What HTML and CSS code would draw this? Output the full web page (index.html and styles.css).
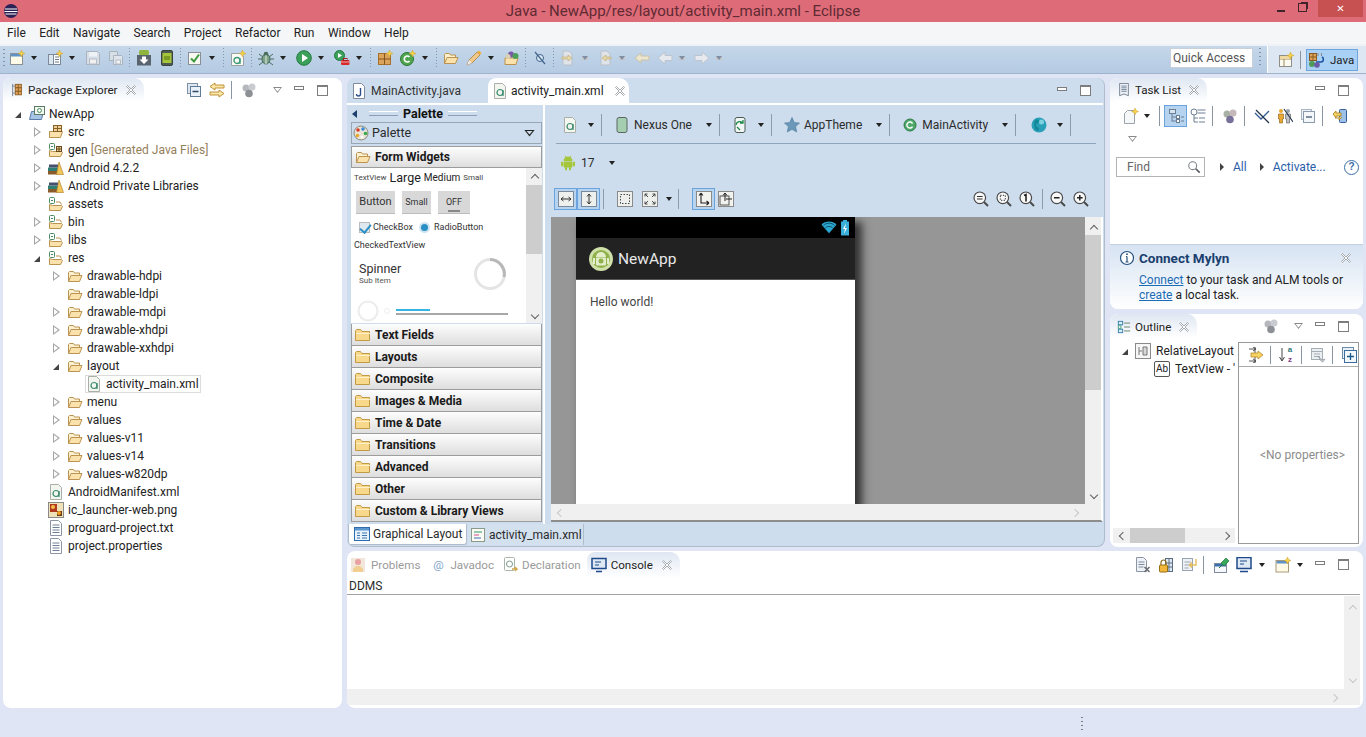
FILE: index.html
```html
<!DOCTYPE html>
<html lang="en">
<head>
<meta charset="utf-8">
<title>Java - NewApp/res/layout/activity_main.xml - Eclipse</title>
<link rel="stylesheet" href="styles.css">
</head>
<body>
<svg class="defs" width="0" height="0" aria-hidden="true">
  <symbol id="newwin" viewBox="0 0 16 16"><rect x="1.500" y="3.500" width="12" height="11" fill="#fffbe8" stroke="#8a8f96"/><rect x="2" y="4" width="11" height="2.500" fill="#5f93c8"/><path d="M12.500 0l1 2.500 2.500 1-2.500 1-1 2.500-1-2.500-2.500-1 2.500-1z" fill="#f7d24a" stroke="#c9a02c" stroke-width=".5"/></symbol>
  <symbol id="newpkg" viewBox="0 0 16 16"><rect x="1.500" y="4.500" width="5" height="10" fill="#dbe6ee" stroke="#7c8a99"/><rect x="6.500" y="4.500" width="7" height="10" fill="#fff" stroke="#7c8a99"/><path d="M8 7h4M8 9.500h4M8 12h4" stroke="#6c7a8a"/><path d="M12.500 0l1 2.500 2.500 1-2.500 1-1 2.500-1-2.500-2.500-1 2.500-1z" fill="#f7d24a" stroke="#c9a02c" stroke-width=".5"/></symbol>
  <symbol id="save" viewBox="0 0 16 16"><path d="M1.500 1.500h11l2 2v11h-13z" fill="#d6dee8" stroke="#a9b2bd"/><rect x="4" y="2" width="8" height="4.500" fill="#eef2f6"/><rect x="4.500" y="9" width="7" height="5" fill="#f0f0f0" stroke="#b5bcc4"/></symbol>
  <symbol id="saveall" viewBox="0 0 16 16"><path d="M1.500 1.500h8v9h-8z" fill="#d6dee8" stroke="#aab2bc"/><path d="M5.500 5.500h8l1 1v8h-9z" fill="#dfe5ec" stroke="#a9b2bd"/><rect x="8" y="10" width="4.500" height="4" fill="#f2f2f2" stroke="#b5bcc4"/></symbol>
  <symbol id="sdk" viewBox="0 0 16 16"><rect x="3" y="0" width="10" height="5" rx="1.500" fill="#8fb63c"/><rect x="1" y="5" width="14" height="10.500" fill="#59646e"/><path d="M6 6.500h4v3h2.500L8 14 3.500 9.500H6z" fill="#fff"/></symbol>
  <symbol id="avd" viewBox="0 0 16 16"><rect x="2.500" y=".5" width="11" height="15" rx="1.500" fill="#4f5a52" stroke="#39423b"/><rect x="3.500" y="3" width="9" height="10" fill="#a5c63b"/><path d="M5 6h6v4H5z" fill="#7c9a24"/></symbol>
  <symbol id="check" viewBox="0 0 16 16"><rect x="1.500" y="2.500" width="12" height="12" fill="#f8f8f0" stroke="#8a8f96"/><path d="M4 8.500l3 3 5-7" fill="none" stroke="#3d9a3d" stroke-width="2"/></symbol>
  <symbol id="newand" viewBox="0 0 16 16"><path d="M1.500 3.500h9l3 3v9h-12z" fill="#fbfbf4" stroke="#9aa2a8"/><circle cx="7" cy="10.500" r="3" fill="none" stroke="#3c9a7a" stroke-width="1.300"/><path d="M10 8v6" stroke="#3c9a7a" stroke-width="1.300"/><path d="M12.500 0l1 2.500 2.500 1-2.500 1-1 2.500-1-2.500-2.500-1 2.500-1z" fill="#f7d24a" stroke="#c9a02c" stroke-width=".5"/></symbol>
  <symbol id="bug" viewBox="0 0 16 16"><ellipse cx="8" cy="9" rx="4" ry="5" fill="#7da48a" stroke="#3e6a55"/><circle cx="8" cy="4" r="2.300" fill="#496f5e"/><path d="M1 4l4 3M15 4l-4 3M0 9h4M16 9h-4M1 15l4-3M15 15l-4-3" stroke="#4c6b5c"/><path d="M8 5v9" stroke="#e8f0e0"/></symbol>
  <symbol id="run" viewBox="0 0 16 16"><circle cx="8" cy="8" r="7.300" fill="#3ba05a" stroke="#237a3f"/><path d="M6 4l6 4-6 4z" fill="#fff"/></symbol>
  <symbol id="runext" viewBox="0 0 16 16"><circle cx="5.500" cy="5.500" r="5" fill="#3ba05a" stroke="#237a3f"/><path d="M4 3l4 2.500L4 8z" fill="#fff"/><rect x="7" y="10" width="8.500" height="5" rx="1" fill="#d8292b"/><rect x="9.500" y="8.500" width="3.500" height="2" fill="none" stroke="#a61c1e"/><path d="M7 12h8.500" stroke="#fff" stroke-width=".6"/></symbol>
  <symbol id="pkgnew" viewBox="0 0 16 16"><rect x="1.500" y="3.500" width="12" height="11" fill="#dca35a" stroke="#a9702a"/><path d="M7.500 3.500v11M1.500 9h12" stroke="#85541c"/><path d="M12.500 0l1 2.500 2.500 1-2.500 1-1 2.500-1-2.500-2.500-1 2.500-1z" fill="#f7d24a" stroke="#c9a02c" stroke-width=".5"/></symbol>
  <symbol id="cnew" viewBox="0 0 16 16"><circle cx="7" cy="9" r="6.500" fill="#4fa44e" stroke="#2e7a35"/><path d="M9.500 7a3 3 0 1 0 0 4" fill="none" stroke="#fff" stroke-width="1.600"/><path d="M12.500 0l1 2.500 2.500 1-2.500 1-1 2.500-1-2.500-2.500-1 2.500-1z" fill="#f7d24a" stroke="#c9a02c" stroke-width=".5"/></symbol>
  <symbol id="folder" viewBox="0 0 16 16"><path d="M1.500 13.500v-9l1-1h4l1 1.500h5v2.500" fill="#fdf0cf" stroke="#bb9350"/><path d="M1.500 13.500l2.500-6h11l-2.500 6z" fill="#fbe1ab" stroke="#bb9350"/></symbol>
  <symbol id="srcfold" viewBox="0 0 16 16"><path d="M1.500 13.500v-6h13l-2 6z" fill="#fbe1ab" stroke="#bb9350"/><path d="M1.500 13.500v-6" stroke="#bb9350"/><rect x="5.500" y="1.500" width="8" height="6" fill="#eed09a" stroke="#8a6124"/><path d="M9.500 1.500v6M5.500 4.500h8" stroke="#8a6124"/></symbol>
  <symbol id="genfold" viewBox="0 0 16 16"><path d="M1.500 14.500v-6l3 1h9l1 1-2 4z" fill="#fbe1ab" stroke="#bb9350"/><rect x="1.500" y="1.500" width="5" height="6" rx="1" fill="#fff" stroke="#4c8a63"/><path d="M3 4.500h2" stroke="#4c8a63"/><rect x="8.500" y="4.500" width="5" height="5" fill="#eed09a" stroke="#6a4a1a"/><path d="M11 4.500v5M8.500 7h5" stroke="#6a4a1a"/></symbol>
  <symbol id="resfold" viewBox="0 0 16 16"><path d="M1.500 14.500v-6l3 1h9l1 1-2 4z" fill="#fbe1ab" stroke="#bb9350"/><rect x="1.500" y="1.500" width="5" height="6" rx="1" fill="#fff" stroke="#4c8a63"/><path d="M3 4.500h2" stroke="#4c8a63"/><path d="M8 6h4l1.500 2.500" fill="none" stroke="#bb9350"/></symbol>
  <symbol id="lib" viewBox="0 0 16 16"><rect x="0" y="11" width="10" height="3.500" fill="#8a5a28"/><rect x="0" y="7.500" width="10" height="3.500" fill="#2d7f73"/><rect x="1" y="4.500" width="9" height="3" fill="#46506e"/><path d="M11 2l4.500 12.500h-7z" fill="#f1c75a" stroke="#b5862c" stroke-width=".7"/></symbol>
  <symbol id="proj" viewBox="0 0 16 16"><path d="M.5 13.500l2-8h12l-2 8z" fill="#a8c4e6" stroke="#5a7ea8"/><rect x="5.500" y=".5" width="10" height="8" fill="#f4f8f2" stroke="#5a7a62"/><circle cx="10.500" cy="4.500" r="2" fill="none" stroke="#4c8a63"/></symbol>
  <symbol id="xml" viewBox="0 0 16 16"><path d="M2.500 .5h8l3 3v12h-11z" fill="#f2f6ee" stroke="#a8b0a8"/><circle cx="8" cy="9.500" r="3" fill="none" stroke="#3c8a72" stroke-width="1.200"/><path d="M11 7v6" stroke="#3c8a72" stroke-width="1.200"/></symbol>
  <symbol id="txt" viewBox="0 0 16 16"><path d="M2.500 .5h8l3 3v12h-11z" fill="#fff" stroke="#8a96a6"/><path d="M4.500 5h7M4.500 7.500h7M4.500 10h7M4.500 12.500h7" stroke="#6e7f98"/></symbol>
  <symbol id="javafile" viewBox="0 0 16 16"><path d="M2.500 .5h8l3 3v12h-11z" fill="#fff" stroke="#7f8b9c"/><path d="M9.500 5v6a2 2 0 0 1-4 0" fill="none" stroke="#2c4f8c" stroke-width="1.400"/></symbol>
  <symbol id="png" viewBox="0 0 16 16"><rect x=".5" y=".5" width="15" height="15" fill="#f0e2b8" stroke="#8a8a8a"/><rect x="2" y="2" width="7" height="8" fill="#b13a1e"/><circle cx="5" cy="5" r="2" fill="#f2c14a"/><rect x="9" y="9" width="5" height="5" fill="#6a3a1a"/><circle cx="11" cy="11" r="2" fill="#f0a020"/></symbol>
  <symbol id="pkgview" viewBox="0 0 16 16"><path d="M3 1v14" stroke="#6c7a8a"/><rect x="6" y="1.500" width="7" height="4" fill="#dca35a" stroke="#8a5a20"/><rect x="6" y="5.500" width="7" height="4" fill="#dca35a" stroke="#8a5a20"/><rect x="6" y="9.500" width="7" height="4" fill="#dca35a" stroke="#8a5a20"/><path d="M9.500 1.500v12" stroke="#8a5a20"/><path d="M3 3.500h3M3 11.500h3" stroke="#6c7a8a"/></symbol>
  <symbol id="close" viewBox="0 0 12 12"><path d="M1.500 2.500l1-1L6 5l3.500-3.500 1 1L7 6l3.500 3.500-1 1L6 7l-3.500 3.500-1-1L5 6z" fill="#fff" stroke="#9aa0a6" stroke-width=".9"/></symbol>
  <symbol id="collapse" viewBox="0 0 16 16"><rect x="1.500" y="1.500" width="10" height="10" fill="#dfe8f2" stroke="#7f8fa2"/><rect x="4.500" y="4.500" width="10" height="10" fill="#eaf1f8" stroke="#5f7a96"/><path d="M6.500 9.500h6" stroke="#324a64" stroke-width="1.300"/></symbol>
  <symbol id="sync" viewBox="0 0 16 16"><path d="M6 1L1 4.500 6 8V6h9V3H6z" fill="#fbe6a6" stroke="#b88a2c" stroke-width=".9"/><path d="M10 8l5 3.500-5 3.500v-2H1v-3h9z" fill="#fbe6a6" stroke="#b88a2c" stroke-width=".9"/></symbol>
  <symbol id="balls" viewBox="0 0 16 16"><circle cx="5" cy="6" r="3.500" fill="#b4b8bc"/><circle cx="11" cy="5" r="3.500" fill="#c8ccd0"/><circle cx="8" cy="11.500" r="3.800" fill="#8d9196"/></symbol>
  <symbol id="balls2" viewBox="0 0 16 16"><circle cx="5" cy="6" r="3.500" fill="#a9b0a4"/><circle cx="11" cy="5" r="3.500" fill="#c4b8b8"/><circle cx="8" cy="11.500" r="3.800" fill="#77719a"/></symbol>
  <symbol id="java" viewBox="0 0 16 16"><path d="M10 1v3M13.500 1v3" stroke="#8a8a8a"/><path d="M8 10h5c3 0 3-4 1-5" fill="none" stroke="#1d50a0" stroke-width="1.500"/><rect x="1.500" y="1.500" width="7" height="7" fill="#dca35a" stroke="#8a5a20"/><path d="M5 1.500v7M1.500 5h7" stroke="#8a5a20"/><circle cx="4" cy="12" r="3" fill="#4f9a5a"/><circle cx="9" cy="13" r="2.800" fill="#6a5aa8"/></symbol>
  <symbol id="persp" viewBox="0 0 16 16"><rect x="1.500" y="3.500" width="12" height="11" fill="#fbfbf2" stroke="#8f8f88"/><path d="M1.500 7h12M6 7v7.500" stroke="#9c8a5a"/><rect x="2" y="4" width="11" height="3" fill="#f0d9a0"/><path d="M12.500 0l1 2.500 2.500 1-2.500 1-1 2.500-1-2.500-2.500-1 2.500-1z" fill="#f7d24a" stroke="#c9a02c" stroke-width=".5"/></symbol>
  <symbol id="task" viewBox="0 0 16 16"><path d="M3 .5h10v14l-5-2-5 2z" fill="#eef1f6" stroke="#6f7a8c"/><path d="M5 3.500h6M5 5.500h6M5 7.500h6M5 9.500h6" stroke="#687a92"/></symbol>
  <symbol id="tasknew" viewBox="0 0 16 16"><path d="M1.500 5.500l3-3h7v13h-10z" fill="#f6f7f8" stroke="#9aa2ac"/><path d="M12 0l1 2.500 2.500 1-2.500 1-1 2.500-1-2.500-2.500-1 2.500-1z" fill="#f7d24a" stroke="#c9a02c" stroke-width=".5"/></symbol>
  <symbol id="cat" viewBox="0 0 16 16"><rect x="1.500" y="1.500" width="6" height="4" fill="#d8e4f0" stroke="#6c7e94"/><path d="M4 5.500v8M4 9h4M4 13h4" stroke="#6c7e94"/><rect x="8.500" y="7.500" width="3" height="3" fill="#fff" stroke="#6c7e94"/><rect x="8.500" y="11.500" width="3" height="3" fill="#fff" stroke="#6c7e94"/><path d="M13 9h3M13 13h3" stroke="#6c7e94"/></symbol>
  <symbol id="sched" viewBox="0 0 16 16"><circle cx="4" cy="4" r="3" fill="#fff" stroke="#6c7e94"/><path d="M7.500 2h8M7.500 5h8M4 7v7M4 10h4M4 14h4M9 10h6M9 14h6" stroke="#6c7e94"/></symbol>
  <symbol id="hide" viewBox="0 0 16 16"><path d="M1 5l6 6 8-8" fill="none" stroke="#2f5c92" stroke-width="1.300"/><path d="M2 2l13 13" stroke="#20324a" stroke-width="1.200"/></symbol>
  <symbol id="people" viewBox="0 0 16 16"><circle cx="4" cy="3" r="2" fill="#e9a834"/><path d="M1.500 6h5v5h-1v4h-3v-4h-1z" fill="#e9a834" stroke="#8a5a14" stroke-width=".6"/><circle cx="11" cy="3" r="2" fill="#9aa2a8"/><path d="M8.500 6h5v5h-1v4h-3v-4h-1z" fill="#c0c4c8" stroke="#555" stroke-width=".6"/><path d="M7 1l9 13" stroke="#20324a" stroke-width="1.100"/></symbol>
  <symbol id="collapseb" viewBox="0 0 16 16"><rect x="1.500" y="1.500" width="10" height="10" fill="#eef2f6" stroke="#aab4c0"/><rect x="3.500" y="3.500" width="11" height="11" fill="#f4f7fa" stroke="#8a9aac"/><path d="M6 9h6" stroke="#5a6c80" stroke-width="1.300"/></symbol>
  <symbol id="repo" viewBox="0 0 16 16"><rect x="7.500" y="1.500" width="7" height="13" rx="1" fill="#9cc0e6" stroke="#345f9a"/><path d="M1 6l3-3v2h5v3H4v2z" fill="#f6d362" stroke="#a87c1c" stroke-width=".8"/><path d="M10 9l-3 3v-2H3" fill="#f6d362" stroke="#a87c1c" stroke-width=".8"/></symbol>
  <symbol id="search" viewBox="0 0 16 16"><circle cx="6.500" cy="6.500" r="4.500" fill="#fff" stroke="#7c8288" stroke-width="1.200"/><path d="M10 10l4.500 4.500" stroke="#595e64" stroke-width="2"/></symbol>
  <symbol id="info" viewBox="0 0 16 16"><circle cx="8" cy="8" r="6.500" fill="#fff" stroke="#24527f" stroke-width="1.200"/><path d="M8 6.500v5.500M6.500 12h3M7 6.500h1" stroke="#24527f" stroke-width="1.200"/><circle cx="8" cy="4.200" r=".9" fill="#24527f"/></symbol>
  <symbol id="outline" viewBox="0 0 16 16"><rect x="1.500" y="1.500" width="5" height="4" fill="#d8ecf6" stroke="#2f7aa8"/><rect x="1.500" y="10.500" width="5" height="4" fill="#d8ecf6" stroke="#2f7aa8"/><rect x="1.500" y="6.500" width="3" height="3" fill="#fff" stroke="#3a9a7a"/><path d="M8 3.500h7M8 8h7M8 12.500h7" stroke="#5c7a60"/></symbol>
  <symbol id="relative" viewBox="0 0 16 16"><rect x=".5" y=".5" width="15" height="15" fill="#f6f6f6" stroke="#8a8a8a"/><path d="M4 4v8M4 8h3M12 4v8h-4V4z" fill="#d8d8d8" stroke="#777"/></symbol>
  <symbol id="filter" viewBox="0 0 16 16"><path d="M1 2h6M1 14h6M5 0l3 2-3 2M5 12l3 2-3 2M7 0v16" fill="none" stroke="#444" stroke-width=".9"/><path d="M3 6h7V4l5 4-5 4v-2H3z" fill="#f6d362" stroke="#b88a2c" stroke-width=".8"/></symbol>
  <symbol id="sortarrow" viewBox="0 0 6 16"><path d="M3 1v12M.5 10L3 14l2.500-4" fill="none" stroke="#444"/></symbol>
  <symbol id="propdoc" viewBox="0 0 16 16"><rect x="1.500" y="1.500" width="11" height="11" fill="#eceff2" stroke="#a6aeb6"/><path d="M1.500 4.500h11M4 7h6M4 9.500h6" stroke="#a6aeb6"/><path d="M8 9l4 4 3-1-2 3-2-1z" fill="#ccd2d8" stroke="#8a9098" stroke-width=".6"/></symbol>
  <symbol id="expand" viewBox="0 0 16 16"><rect x="1.500" y=".5" width="11" height="11" fill="#e8f1f8" stroke="#6c8cac"/><rect x="3.500" y="3.500" width="12" height="12" fill="#f2f8fc" stroke="#3c6c9c"/><path d="M9.500 6v7M6 9.500h7" stroke="#1c5a8c" stroke-width="1.300"/></symbol>
  <symbol id="palette" viewBox="0 0 16 16"><circle cx="8" cy="8" r="7" fill="#e8e4d8" stroke="#8a8878"/><circle cx="5" cy="5" r="1.800" fill="#d83a2a"/><circle cx="10" cy="4" r="1.800" fill="#3a8ad8"/><circle cx="12.500" cy="8.500" r="1.800" fill="#3aa84a"/><circle cx="4.500" cy="10.500" r="1.800" fill="#e8a82a"/><circle cx="9" cy="12" r="1.500" fill="#fff"/></symbol>
  <symbol id="fclosed" viewBox="0 0 16 16"><path d="M.5 13.500v-10l1-1h4l1.500 2h7.500v9z" fill="#f8d98c" stroke="#c29a46"/><path d="M1 6.500h14" stroke="#fdf0c8"/></symbol>
  <symbol id="phone" viewBox="0 0 16 16"><rect x="3" y=".5" width="10" height="15" rx="2" fill="#a5cdb0" stroke="#5a6860"/></symbol>
  <symbol id="rot" viewBox="0 0 16 16"><rect x="3" y=".5" width="10" height="15" rx="2" fill="#f2f6f4" stroke="#4a5a50"/><path d="M4 8a4 4 0 0 1 7-2M11 3v3H8M5 10l3 3" fill="none" stroke="#1e8a4a" stroke-width="1.300"/></symbol>
  <symbol id="apptheme" viewBox="0 0 16 16"><path d="M8 .5l2.300 5 5.200.6-3.900 3.500 1.100 5.400L8 12.300l-4.700 2.700 1.100-5.400L.5 6.100l5.200-.6z" fill="#6b97b8" stroke="#4a7a9a" stroke-width=".6"/></symbol>
  <symbol id="cact" viewBox="0 0 16 16"><circle cx="8" cy="8" r="6" fill="#4fa96a" stroke="#2e7a45"/><path d="M10.500 6.500a3 3 0 1 0 0 3" fill="none" stroke="#fff" stroke-width="1.500"/></symbol>
  <symbol id="globe" viewBox="0 0 16 16"><circle cx="8" cy="8" r="7.500" fill="#2aa0b8"/><path d="M4 3c3-1 5 0 4 2S5 6 5 8s3 2 3 4-2 2-3 1S2 6 4 3z" fill="#128898"/><circle cx="10.500" cy="5" r="2.500" fill="#7fd2e0"/></symbol>
  <symbol id="droid" viewBox="0 0 16 16"><path d="M3.500 6a4.500 4.500 0 0 1 9 0z" fill="#a4c639"/><path d="M5 1l1.500 2M11 1L9.500 3" stroke="#a4c639"/><rect x="3.500" y="6.500" width="9" height="6" rx="1" fill="#a4c639"/><rect x="1" y="6.500" width="2" height="5" rx="1" fill="#a4c639"/><rect x="13" y="6.500" width="2" height="5" rx="1" fill="#a4c639"/><rect x="5" y="12" width="2" height="3.500" rx="1" fill="#a4c639"/><rect x="9" y="12" width="2" height="3.500" rx="1" fill="#a4c639"/></symbol>
  <symbol id="fitw" viewBox="0 0 16 16"><rect x=".5" y=".5" width="15" height="15" fill="#eef0ee" stroke="#7a8a9a"/><path d="M3 8h10M3 8l2.500-2M3 8l2.500 2M13 8l-2.500-2M13 8l-2.500 2" fill="none" stroke="#333"/></symbol>
  <symbol id="fith" viewBox="0 0 16 16"><rect x=".5" y=".5" width="15" height="15" fill="#eef0ee" stroke="#7a8a9a"/><path d="M8 3v10M8 3L6 5.500M8 3l2 2.500M8 13l-2-2.500M8 13l2-2.500" fill="none" stroke="#333"/></symbol>
  <symbol id="dotted" viewBox="0 0 16 16"><rect x=".5" y=".5" width="15" height="15" fill="#eef0ee" stroke="#8a8a8a"/><rect x="3.500" y="3.500" width="9" height="9" fill="none" stroke="#444" stroke-dasharray="1.500 1.500"/></symbol>
  <symbol id="arrows4" viewBox="0 0 16 16"><rect x=".5" y=".5" width="15" height="15" fill="#eef0ee" stroke="#8a8a8a"/><path d="M3 3l3 3M13 3l-3 3M3 13l3-3M13 13l-3-3M3 3h2.500M3 3v2.500M13 3h-2.500M13 3v2.500M3 13h2.500M3 13v-2.500M13 13h-2.500M13 13v-2.500" fill="none" stroke="#444"/></symbol>
  <symbol id="lay1" viewBox="0 0 16 16"><rect x=".5" y=".5" width="15" height="15" fill="#f2f2ee" stroke="#8a8a8a"/><path d="M5 2v10h8M5 2L3 4.500M5 2l2 2.500M13 12l-2.500-2M13 12l-2.500 2" fill="none" stroke="#222" stroke-width="1.100"/></symbol>
  <symbol id="lay2" viewBox="0 0 16 16"><rect x=".5" y=".5" width="15" height="15" fill="#f2f2ee" stroke="#8a8a8a"/><rect x="2" y="5" width="9" height="9" fill="none" stroke="#555"/><path d="M7 2v8M7 2L5 4.500M7 2l2 2.500M14 8H8" fill="none" stroke="#222"/></symbol>
  <symbol id="zeq" viewBox="0 0 16 16"><circle cx="6.800" cy="6.800" r="5.800" fill="#f8f8f8" stroke="#4a4a4a" stroke-width="1.200"/><path d="M11 11l4 4" stroke="#4a4a4a" stroke-width="2"/><path d="M4 5.500h5.600M4 8h5.600" stroke="#333" stroke-width="1.200"/></symbol>
  <symbol id="zfit" viewBox="0 0 16 16"><circle cx="6.800" cy="6.800" r="5.800" fill="#f8f8f8" stroke="#4a4a4a" stroke-width="1.200"/><path d="M11 11l4 4" stroke="#4a4a4a" stroke-width="2"/><rect x="4.300" y="4.300" width="5" height="5" fill="none" stroke="#333" stroke-dasharray="1.300 1.300"/></symbol>
  <symbol id="zone" viewBox="0 0 16 16"><circle cx="6.800" cy="6.800" r="5.800" fill="#f8f8f8" stroke="#4a4a4a" stroke-width="1.200"/><path d="M11 11l4 4" stroke="#4a4a4a" stroke-width="2"/><path d="M5 4.500l2-1v7" fill="none" stroke="#222" stroke-width="1.600"/></symbol>
  <symbol id="zminus" viewBox="0 0 16 16"><circle cx="6.800" cy="6.800" r="5.800" fill="#f8f8f8" stroke="#4a4a4a" stroke-width="1.200"/><path d="M11 11l4 4" stroke="#4a4a4a" stroke-width="2"/><path d="M4 6.800h5.600" stroke="#222" stroke-width="1.500"/></symbol>
  <symbol id="zplus" viewBox="0 0 16 16"><circle cx="6.800" cy="6.800" r="5.800" fill="#f8f8f8" stroke="#4a4a4a" stroke-width="1.200"/><path d="M11 11l4 4" stroke="#4a4a4a" stroke-width="2"/><path d="M4 6.800h5.600M6.800 4v5.600" stroke="#222" stroke-width="1.500"/></symbol>
  <symbol id="gl" viewBox="0 0 16 16"><rect x=".5" y="1.500" width="15" height="13" fill="#e8f2fa" stroke="#2f6cae"/><rect x="1" y="2" width="14" height="2.500" fill="#5b96cf"/><path d="M3 7h3M3 9.500h3M3 12h3M8 7h5M8 9.500h5M8 12h5" stroke="#3a74b0"/></symbol>
  <symbol id="xmlsrc" viewBox="0 0 16 16"><rect x="1.500" y="1.500" width="13" height="13" fill="#fbfbf4" stroke="#8a9a8a"/><path d="M4 5h8" stroke="#2f9a6a" stroke-width="1.200"/><path d="M4 8h5" stroke="#d24a8a" stroke-width="1.200"/><path d="M4 11h7" stroke="#3a6ab8" stroke-width="1.200"/></symbol>
  <symbol id="problems" viewBox="0 0 16 16"><rect x="1" y="1" width="14" height="14" fill="#f2e6da"/><circle cx="8" cy="5" r="3" fill="#e8a0a0"/><path d="M3 15v-3l3-3h4l3 3v3z" fill="#f0cf90"/></symbol>
  <symbol id="decl" viewBox="0 0 16 16"><rect x="2.500" y=".5" width="10" height="13" rx="1" fill="#fff" stroke="#a8b4a8"/><circle cx="7.500" cy="7" r="3" fill="none" stroke="#7a9a86"/><path d="M10 12h5l-2-2M15 12l-2 2" fill="none" stroke="#d2a84a" stroke-width="1.300"/></symbol>
  <symbol id="console" viewBox="0 0 16 16"><rect x="1" y="1.500" width="14" height="10" fill="#dfe9f4" stroke="#1e4a8c" stroke-width="1.500"/><path d="M4 5h6M4 8h4" stroke="#1e4a8c"/><path d="M5 14.500h6" stroke="#1e4a8c" stroke-width="1.500"/></symbol>
  <symbol id="clearc" viewBox="0 0 16 16"><path d="M1.500 .5h7l3 3v11h-10z" fill="#eef2f6" stroke="#8c96a2"/><path d="M3.500 5h6M3.500 7.500h6M3.500 10h5" stroke="#7c8a9c"/><path d="M9.500 10l5 5M14.500 10l-5 5" stroke="#6a6e72" stroke-width="1.600"/></symbol>
  <symbol id="lock" viewBox="0 0 16 16"><rect x="7.500" y="1.500" width="7" height="13" fill="#dfe9f2" stroke="#5a6c80"/><path d="M11 1.500v13M7.500 6h7M7.500 10h7" stroke="#5a6c80"/><path d="M3 8V5.500a2.500 2.500 0 0 1 5 0V8" fill="none" stroke="#8a6a1c" stroke-width="1.200"/><rect x="1.500" y="8" width="8" height="7" rx="1" fill="#f1b73a" stroke="#9a6f12"/></symbol>
  <symbol id="wordw" viewBox="0 0 16 16"><rect x="1.500" y="1.500" width="10" height="12" fill="#eef2f6" stroke="#9aa4b0"/><path d="M3.500 5h6M3.500 8h6M3.500 11h4" stroke="#9aa4b0"/><path d="M15 2v6H9M11 5.500L8.500 8l2.500 2.500" fill="none" stroke="#e4bc5a" stroke-width="1.400"/></symbol>
  <symbol id="pin" viewBox="0 0 16 16"><rect x="1.500" y="6.500" width="12" height="9" fill="#f6f8fa" stroke="#7c8a9a"/><rect x="2" y="7" width="11" height="2.500" fill="#3a70b0"/><path d="M8 6l5-5 3 3-5 5z" fill="#3aa85a" stroke="#1c7a3a" stroke-width=".7"/><path d="M9 8l-3 3" stroke="#1c7a3a"/></symbol>
  <symbol id="monitor" viewBox="0 0 16 16"><rect x="1" y=".5" width="14" height="11" fill="#dfe9f4" stroke="#1e4a8c" stroke-width="1.500"/><path d="M4 4h7M4 7h4" stroke="#1e4a8c"/><path d="M4 14.500h8" stroke="#1e4a8c" stroke-width="1.500"/></symbol>
  <symbol id="newcon" viewBox="0 0 16 16"><rect x="1" y="3.500" width="12.500" height="11.500" fill="#fff9e6" stroke="#a89a78"/><rect x="1.500" y="4" width="11.500" height="2.500" fill="#5f93c8"/><path d="M12.500 0l1 2.500 2.500 1-2.500 1-1 2.500-1-2.500-2.500-1 2.500-1z" fill="#f7d24a" stroke="#c9a02c" stroke-width=".5"/></symbol>
  <symbol id="undo" viewBox="0 0 16 16"><path d="M1 8l7-6v3.500h7v5H8V14z" fill="#e6eaef" stroke="#bcc4cf"/></symbol>
  <symbol id="redo" viewBox="0 0 16 16"><path d="M15 8L8 2v3.500H1v5h7V14z" fill="#e6eaef" stroke="#bcc4cf"/></symbol>
  <symbol id="lastedit" viewBox="0 0 16 16"><path d="M1 8l6-5v3h8v4H7v3z" fill="#ece6cf" stroke="#c9c2a8"/></symbol>
  <symbol id="annnext" viewBox="0 0 16 16"><path d="M3 1h6l3 3v11H3z" fill="#dfe4ea" stroke="#b9c0c8"/><path d="M8 5l4 3-4 3v-2H2V7h6z" fill="#e8d9a8" stroke="#c2b080" stroke-width=".7"/></symbol>
  <symbol id="annprev" viewBox="0 0 16 16"><path d="M4 1h6l3 3v11H4z" fill="#dfe4ea" stroke="#b9c0c8"/><path d="M9 5L5 8l4 3V9h5V7H9z" fill="#e8d9a8" stroke="#c2b080" stroke-width=".7"/></symbol>
  <symbol id="noann" viewBox="0 0 16 16"><circle cx="8" cy="8" r="3.500" fill="#dce8f2" stroke="#40648a"/><path d="M3 2l10 12" stroke="#40648a" stroke-width="1.200"/></symbol>
  <symbol id="pencil" viewBox="0 0 16 16"><path d="M1 15l2-5L11 2l3 3-8 8z" fill="#f0c888" stroke="#a8824a" stroke-width=".8"/><path d="M11 2l3 3 1.500-2L13 .5z" fill="#f0b040"/><path d="M1 15l2-5 3 3z" fill="#e8e8e8"/></symbol>
  <symbol id="openball" viewBox="0 0 16 16"><path d="M1 14.500V8h13l-2 6.500z" fill="#fbe1ab" stroke="#bb9350"/><circle cx="7" cy="4.500" r="3" fill="#7a5aa8"/><circle cx="11.500" cy="6" r="3" fill="#4aa05a"/><circle cx="4" cy="6.500" r="2.500" fill="#d8d0b0"/></symbol>
  <symbol id="wifi" viewBox="0 0 16 16"><path d="M8 14L0 5a11 11 0 0 1 16 0z" fill="#2aa6cf"/><path d="M2 6a8 8 0 0 1 12 0M4 8.500a5.500 5.500 0 0 1 8 0" fill="none" stroke="#0a3a4c" stroke-width=".8"/></symbol>
  <symbol id="battery" viewBox="0 0 10 16"><rect x="3" y="0" width="4" height="2" fill="#3ab0d8"/><rect x="1" y="1.500" width="8" height="14" fill="#3ab0d8"/><path d="M6 3L3 9h2l-1 5 3-6H5z" fill="#fff"/></symbol>
  <symbol id="launcher" viewBox="0 0 24 24"><circle cx="12" cy="12" r="12" fill="#cfe0a8"/><circle cx="12" cy="12" r="9" fill="#8fb04a"/><path d="M7 10a5 5 0 0 1 10 0z" fill="#e4eecb"/><rect x="7" y="10.500" width="10" height="8" rx="1" fill="#e4eecb"/><rect x="4" y="11" width="2" height="6" fill="#e4eecb"/><rect x="18" y="11" width="2" height="6" fill="#e4eecb"/><circle cx="12" cy="14" r="2.500" fill="#8fb04a"/></symbol>
</svg>

<header class="titlebar">
  <svg class="sysicon" viewBox="0 0 16 16"><circle cx="8" cy="8" r="7" fill="#2c2255"/><path d="M2 6h12M1.500 8.500h13M2.500 11h11" stroke="#fff" stroke-width="1"/></svg>
  <div class="title">Java - NewApp/res/layout/activity_main.xml - Eclipse</div>
  <div class="winctl">
    <span class="win-min"></span>
    <span class="win-res"></span>
    <span class="win-close">✕</span>
  </div>
</header>

<nav class="menubar">
  <span>File</span><span>Edit</span><span>Navigate</span><span>Search</span><span>Project</span><span>Refactor</span><span>Run</span><span>Window</span><span>Help</span>
</nav>

<div class="toolbar">
  <i class="grip"></i>
  <b class="ti"><svg><use href="#newwin"/></svg></b><b class="da"></b>
  <b class="ti"><svg><use href="#newpkg"/></svg></b><b class="da"></b>
  <b class="ti"><svg><use href="#save"/></svg></b>
  <b class="ti"><svg><use href="#saveall"/></svg></b><i class="sp"></i>
  <b class="ti"><svg><use href="#sdk"/></svg></b>
  <b class="ti"><svg><use href="#avd"/></svg></b><i class="sp"></i>
  <b class="ti"><svg><use href="#check"/></svg></b><b class="da"></b><i class="sp"></i>
  <b class="ti"><svg><use href="#newand"/></svg></b><i class="sp"></i>
  <b class="ti"><svg><use href="#bug"/></svg></b><b class="da"></b>
  <b class="ti"><svg><use href="#run"/></svg></b><b class="da"></b>
  <b class="ti"><svg><use href="#runext"/></svg></b><b class="da"></b><i class="sp"></i>
  <b class="ti"><svg><use href="#pkgnew"/></svg></b>
  <b class="ti"><svg><use href="#cnew"/></svg></b><b class="da"></b><i class="sp"></i>
  <b class="ti"><svg><use href="#folder"/></svg></b>
  <b class="ti"><svg><use href="#pencil"/></svg></b><b class="da"></b>
  <b class="ti"><svg><use href="#openball"/></svg></b><i class="sp"></i>
  <b class="ti"><svg><use href="#noann"/></svg></b><i class="sp"></i>
  <b class="ti"><svg><use href="#annnext"/></svg></b><b class="da dim"></b>
  <b class="ti"><svg><use href="#annprev"/></svg></b><b class="da dim"></b>
  <b class="ti"><svg><use href="#lastedit"/></svg></b>
  <b class="ti"><svg><use href="#undo"/></svg></b><b class="da dim"></b>
  <b class="ti"><svg><use href="#redo"/></svg></b><b class="da dim"></b>
  <div class="quick-wrap">
    <div class="quick">Quick Access</div>
    <i class="grip tall"></i>
  </div>
  <div class="persp">
    <svg class="i16"><use href="#persp"/></svg>
    <i class="vsep"></i>
    <div class="javabtn"><svg class="i16"><use href="#java"/></svg><span>Java</span></div>
  </div>
</div>

<main class="wb">
  <section class="panel left">
    <div class="phead">
      <div class="vtab">
        <svg class="i14"><use href="#pkgview"/></svg><span>Package Explorer</span><svg class="x"><use href="#close"/></svg>
      </div>
      <div class="ptools pe-tools">
        <svg class="i16"><use href="#collapse"/></svg>
        <svg class="i16"><use href="#sync"/></svg>
        <i class="vsep"></i>
        <svg class="i16"><use href="#balls"/></svg>
        <i class="chev"></i>
        <i class="min"></i>
        <i class="max"></i>
      </div>
    </div>
    <ul class="tree">
      <li class="l1"><i class="tw open"></i><svg class="i16"><use href="#proj"/></svg><span>NewApp</span></li>
      <li class="l2"><i class="tw"></i><svg class="i16"><use href="#srcfold"/></svg><span>src</span></li>
      <li class="l2"><i class="tw"></i><svg class="i16"><use href="#genfold"/></svg><span>gen <em>[Generated Java Files]</em></span></li>
      <li class="l2"><i class="tw"></i><svg class="i16"><use href="#lib"/></svg><span>Android 4.2.2</span></li>
      <li class="l2"><i class="tw"></i><svg class="i16"><use href="#lib"/></svg><span>Android Private Libraries</span></li>
      <li class="l2"><i class="tw none"></i><svg class="i16"><use href="#resfold"/></svg><span>assets</span></li>
      <li class="l2"><i class="tw"></i><svg class="i16"><use href="#resfold"/></svg><span>bin</span></li>
      <li class="l2"><i class="tw"></i><svg class="i16"><use href="#resfold"/></svg><span>libs</span></li>
      <li class="l2"><i class="tw open"></i><svg class="i16"><use href="#resfold"/></svg><span>res</span></li>
      <li class="l3"><i class="tw"></i><svg class="i16"><use href="#folder"/></svg><span>drawable-hdpi</span></li>
      <li class="l3"><i class="tw none"></i><svg class="i16"><use href="#folder"/></svg><span>drawable-ldpi</span></li>
      <li class="l3"><i class="tw"></i><svg class="i16"><use href="#folder"/></svg><span>drawable-mdpi</span></li>
      <li class="l3"><i class="tw"></i><svg class="i16"><use href="#folder"/></svg><span>drawable-xhdpi</span></li>
      <li class="l3"><i class="tw"></i><svg class="i16"><use href="#folder"/></svg><span>drawable-xxhdpi</span></li>
      <li class="l3"><i class="tw open"></i><svg class="i16"><use href="#folder"/></svg><span>layout</span></li>
      <li class="l4"><i class="tw none"></i><span class="sel"><svg class="i16"><use href="#xml"/></svg><span>activity_main.xml</span></span></li>
      <li class="l3"><i class="tw"></i><svg class="i16"><use href="#folder"/></svg><span>menu</span></li>
      <li class="l3"><i class="tw"></i><svg class="i16"><use href="#folder"/></svg><span>values</span></li>
      <li class="l3"><i class="tw"></i><svg class="i16"><use href="#folder"/></svg><span>values-v11</span></li>
      <li class="l3"><i class="tw"></i><svg class="i16"><use href="#folder"/></svg><span>values-v14</span></li>
      <li class="l3"><i class="tw"></i><svg class="i16"><use href="#folder"/></svg><span>values-w820dp</span></li>
      <li class="l2"><i class="tw none"></i><svg class="i16"><use href="#xml"/></svg><span>AndroidManifest.xml</span></li>
      <li class="l2"><i class="tw none"></i><svg class="i16"><use href="#png"/></svg><span>ic_launcher-web.png</span></li>
      <li class="l2"><i class="tw none"></i><svg class="i16"><use href="#txt"/></svg><span>proguard-project.txt</span></li>
      <li class="l2"><i class="tw none"></i><svg class="i16"><use href="#txt"/></svg><span>project.properties</span></li>
    </ul>
  </section>

  <section class="panel editor">
    <div class="ed-tabs">
      <div class="etab"><svg class="i16"><use href="#javafile"/></svg><span>MainActivity.java</span></div>
      <div class="etab active"><svg class="i16"><use href="#xml"/></svg><span>activity_main.xml</span><svg class="x"><use href="#close"/></svg></div>
      <div class="ptools ed-tools"><i class="min"></i><i class="max"></i></div>
    </div>
    <div class="ed-body">
      <div class="ed-main">
        <aside class="pal">
          <div class="pal-top"><span class="ltri"></span><i class="rule"></i><strong>Palette</strong><i class="rule"></i></div>
          <div class="pal-wrap">
            <div class="pal-sel"><svg class="i16"><use href="#palette"/></svg><span>Palette</span><i class="chev dark"></i></div>
            <div class="acc"><svg class="i16"><use href="#folder"/></svg><span>Form Widgets</span></div>
            <div class="widgets">
              <div class="w-body">
                <div class="w-row w1"><span class="t8">TextView</span><span class="t13">Large</span><span class="t11">Medium</span><span class="t8">Small</span></div>
                <div class="w-row w2"><span class="wbtn b1">Button</span><span class="wbtn b2">Small</span><span class="wbtn b3">OFF</span></div>
                <div class="w-row w3"><i class="cb"></i><span class="t9">CheckBox</span><i class="rb"></i><span class="t9">RadioButton</span></div>
                <div class="w-row w4"><span class="t9">CheckedTextView</span></div>
                <div class="w-row w5"><div class="spin"><div class="spin-t">Spinner</div><div class="spin-s">Sub Item</div></div><svg class="ring" viewBox="0 0 34 34"><circle cx="17" cy="17" r="14.500" fill="none" stroke="#e4e4e4" stroke-width="3"/><path d="M17 2.500A14.500 14.500 0 0 1 31 20" fill="none" stroke="#b8b8b8" stroke-width="3"/></svg></div>
                <div class="w-row w6"><svg class="ring2" viewBox="0 0 22 22"><circle cx="11" cy="11" r="9.500" fill="none" stroke="#ececec" stroke-width="2"/></svg><i class="tiny"></i><div class="seek"><i class="seek-on"></i></div></div>
              </div>
              <div class="vscroll pal-sb"><i class="up"></i><i class="thumb"></i><i class="dn"></i></div>
            </div>
            <div class="acc"><svg class="i16"><use href="#fclosed"/></svg><span>Text Fields</span></div>
            <div class="acc"><svg class="i16"><use href="#fclosed"/></svg><span>Layouts</span></div>
            <div class="acc"><svg class="i16"><use href="#fclosed"/></svg><span>Composite</span></div>
            <div class="acc"><svg class="i16"><use href="#fclosed"/></svg><span>Images &amp; Media</span></div>
            <div class="acc"><svg class="i16"><use href="#fclosed"/></svg><span>Time &amp; Date</span></div>
            <div class="acc"><svg class="i16"><use href="#fclosed"/></svg><span>Transitions</span></div>
            <div class="acc"><svg class="i16"><use href="#fclosed"/></svg><span>Advanced</span></div>
            <div class="acc"><svg class="i16"><use href="#fclosed"/></svg><span>Other</span></div>
            <div class="acc"><svg class="i16"><use href="#fclosed"/></svg><span>Custom &amp; Library Views</span></div>
          </div>
        </aside>
        <div class="design">
          <div class="cfg r1">
            <svg class="i16"><use href="#xml"/></svg><b class="da"></b><i class="cs"></i>
            <svg class="i16"><use href="#phone"/></svg><span class="a4">Nexus One</span><b class="da"></b><i class="cs"></i>
            <svg class="i16"><use href="#rot"/></svg><b class="da"></b><i class="cs"></i>
            <svg class="i16"><use href="#apptheme"/></svg><span class="a4">AppTheme</span><b class="da"></b><i class="cs"></i>
            <svg class="i16"><use href="#cact"/></svg><span class="a4">MainActivity</span><b class="da"></b><i class="cs"></i>
            <svg class="i16 glb"><use href="#globe"/></svg><b class="da"></b><i class="cs"></i>
          </div>
          <div class="cfg r2"><svg class="i16"><use href="#droid"/></svg><span>17</span><b class="da"></b></div>
          <div class="cfg r3">
            <span class="tog on"><svg class="i16"><use href="#fitw"/></svg></span>
            <span class="tog on"><svg class="i16"><use href="#fith"/></svg></span>
            <i class="cs s3"></i>
            <svg class="i16"><use href="#dotted"/></svg>
            <svg class="i16 b-b"><use href="#arrows4"/></svg><b class="da"></b><i class="cs s3"></i>
            <span class="tog on b-c"><svg class="i16"><use href="#lay1"/></svg></span>
            <svg class="i16"><use href="#lay2"/></svg>
            <div class="zooms">
              <svg class="i16"><use href="#zeq"/></svg><svg class="i16"><use href="#zfit"/></svg><svg class="i16"><use href="#zone"/></svg><i class="cs"></i><svg class="i16"><use href="#zminus"/></svg><svg class="i16"><use href="#zplus"/></svg>
            </div>
          </div>
          <div class="canvas-wrap">
            <div class="canvas-row">
              <div class="canvas">
                <div class="device">
                  <div class="status"><svg class="wifi"><use href="#wifi"/></svg><svg class="batt"><use href="#battery"/></svg></div>
                  <div class="actionbar"><svg class="launch"><use href="#launcher"/></svg><span>NewApp</span></div>
                  <div class="hello">Hello world!</div>
                </div>
              </div>
              <div class="vscroll can-sb"><i class="up"></i><i class="thumb"></i><i class="dn"></i></div>
            </div>
            <div class="hscroll can-hs"><i class="lf dim"></i><i class="rt dim"></i></div>
          </div>
        </div>
      </div>
      <div class="subtabs">
        <div class="stab on"><svg class="i16"><use href="#gl"/></svg><span>Graphical Layout</span></div>
        <div class="stab"><svg class="i16"><use href="#xmlsrc"/></svg><span>activity_main.xml</span></div>
      </div>
    </div>
  </section>

  <div class="rightcol">
    <section class="panel task">
      <div class="phead">
        <div class="vtab"><svg class="i14"><use href="#task"/></svg><span>Task List</span><svg class="x"><use href="#close"/></svg></div>
        <div class="ptools tk-tools"><i class="min"></i><i class="max"></i></div>
      </div>
      <div class="tk-bar">
        <svg class="i16"><use href="#tasknew"/></svg><b class="da"></b><i class="vsep"></i>
        <span class="tog on"><svg class="i16"><use href="#cat"/></svg></span>
        <svg class="i16"><use href="#sched"/></svg><i class="vsep"></i>
        <svg class="i16"><use href="#balls2"/></svg><i class="vsep"></i>
        <svg class="i16"><use href="#hide"/></svg>
        <svg class="i16"><use href="#people"/></svg>
        <svg class="i16"><use href="#collapseb"/></svg><i class="vsep"></i>
        <svg class="i16"><use href="#repo"/></svg>
      </div>
      <div class="tk-chev"><i class="chev"></i></div>
      <div class="tk-find">
        <div class="find"><span>Find</span><svg class="i14"><use href="#search"/></svg></div>
        <i class="ftri"></i><a>All</a><i class="ftri"></i><a>Activate...</a>
        <span class="helpi">?</span>
      </div>
      <div class="mylyn">
        <div class="my-h"><svg class="i16"><use href="#info"/></svg><strong>Connect Mylyn</strong><svg class="x"><use href="#close"/></svg></div>
        <p><a>Connect</a> to your task and ALM tools or<br><a>create</a> a local task.</p>
      </div>
    </section>
    <section class="panel outline">
      <div class="phead">
        <div class="vtab"><svg class="i14"><use href="#outline"/></svg><span>Outline</span><svg class="x"><use href="#close"/></svg></div>
        <div class="ptools ol-tools"><svg class="i16"><use href="#balls"/></svg><i class="chev"></i><i class="min"></i><i class="max"></i></div>
      </div>
      <div class="ol-body">
        <div class="ol-tree">
          <div class="ol-rows">
            <div class="ol-r r-a"><i class="tw open"></i><svg class="i16"><use href="#relative"/></svg><span>RelativeLayout</span></div>
            <div class="ol-r r-b"><span class="ab">Ab</span><span>TextView - '</span></div>
          </div>
          <div class="hscroll ol-hs"><i class="lf"></i><i class="thumb"></i><i class="rt"></i></div>
        </div>
        <div class="props">
          <div class="pr-bar">
            <svg class="i16"><use href="#filter"/></svg><i class="vsep"></i>
            <span class="sorti"><svg class="sortarrow"><use href="#sortarrow"/></svg><span class="azs"><span class="az-a">a</span><span class="az-z">z</span></span></span><i class="vsep"></i>
            <svg class="i16"><use href="#propdoc"/></svg><i class="vsep"></i>
            <svg class="i16"><use href="#expand"/></svg>
          </div>
          <div class="pr-empty">&lt;No properties&gt;</div>
        </div>
      </div>
    </section>
  </div>

  <section class="panel bottom">
    <div class="bt-head">
      <div class="btab dimt"><svg class="i16"><use href="#problems"/></svg><span>Problems</span></div>
      <div class="btab dimt at"><b class="atg">@</b><span>Javadoc</span></div>
      <div class="btab dimt"><svg class="i16"><use href="#decl"/></svg><span>Declaration</span></div>
      <div class="btab cons"><svg class="i16"><use href="#console"/></svg><span>Console</span><svg class="x"><use href="#close"/></svg></div>
      <div class="ptools bt-tools">
        <svg class="i16"><use href="#clearc"/></svg>
        <svg class="i16"><use href="#lock"/></svg>
        <svg class="i16"><use href="#wordw"/></svg><i class="vsep"></i>
        <svg class="i16"><use href="#pin"/></svg>
        <svg class="i16"><use href="#monitor"/></svg><b class="da"></b>
        <svg class="i16"><use href="#newcon"/></svg><b class="da"></b>
        <i class="min"></i><i class="max"></i>
      </div>
    </div>
    <div class="ddms">DDMS</div>
    <div class="bt-body">
      <div class="bt-text"></div>
      <div class="vscroll bt-sb"><i class="up dim"></i><i class="dn dim"></i></div>
    </div>
    <div class="hscroll bt-hs"><i class="rt dim"></i></div>
  </section>
</main>

<footer class="trim"><i class="grip"></i></footer>
</body>
</html>
```

FILE: styles.css
```css
* { box-sizing: border-box; }
html, body { margin: 0; padding: 0; }
body {
  width: 1366px; height: 737px; overflow: hidden;
  font: 12px/16px Roboto, "Noto Sans", sans-serif;
  color: #2b2b2b; background: #dfe5f4;
}
.defs { display: block; height: 0; }
svg { display: block; flex: none; }
i, b { font-style: normal; flex: none; }
.i16 { width: 16px; height: 16px; }
.i14 { width: 14px; height: 14px; }

/* Title and menu */
.titlebar { height: 22px; background: #de6b78; display: flex; align-items: center; position: relative; }
.sysicon { width: 16px; height: 16px; margin-left: 3px; }
.title { position: absolute; left: 0; right: 0; top: 2px; text-align: center; font-size: 15px; line-height: 18px; color: #5e2a33; }
.winctl { margin-left: auto; display: flex; align-self: flex-start; align-items: flex-start; margin-right: 3px; position: relative; }
.win-min { width: 8px; height: 2px; background: #40242a; margin: 10px 0 0 0; }
.win-res { width: 9px; height: 9px; border: 1.500px solid #40242a; margin: 3px 11px 0 13px; box-shadow: 2px -2px 0 -1px #40242a; }
.win-close { width: 45px; height: 17px; background: #c75050; color: #fff; font: bold 10px/17px "DejaVu Sans", sans-serif; text-align: center; }
.menubar { height: 22px; background: #f5f6f7; display: flex; align-items: center; padding-left: .3px; }
.menubar span { padding: 0 6.700px; font-size: 12px; color: #222; }

/* Main toolbar */
.toolbar { height: 30px; display: flex; align-items: center; padding: 0 0 3px 3px; border-top: 2px solid #eef1f5; border-bottom: 1px solid #9fb3cc; background: linear-gradient(#c5d7ea, #b4cbe3); }
.grip { width: 2px; height: 18px; background: repeating-linear-gradient(#7f93aa 0 1px, transparent 1px 4px); }
.grip.tall { height: 20px; margin: 0 0 0 6px; }
.ti { width: 23px; height: 16px; display: flex; justify-content: center; }
.ti svg { width: 16px; height: 16px; }
.da { width: 15px; height: 4px; position: relative; }
.da::before { content: ""; position: absolute; left: 3px; top: 0; border: 3.500px solid transparent; border-top: 4px solid #222; border-bottom: 0; }
.da.dim { width: 14px; }
.da.dim::before { border-top-color: #7f8ea2; }
.sp { width: 5px; height: 20px; background: repeating-linear-gradient(#8396ad 0 1px, transparent 1px 3px) 2px 0 / 1px 100% no-repeat; }
.quick-wrap { margin-left: auto; display: flex; align-items: center; height: 27px; }
.quick { width: 83px; height: 20px; background: #fff; border: 1px solid #c8d0da; color: #555; font-size: 12px; line-height: 18px; padding-left: 2px; margin-bottom: 1px; }
.persp { margin: 0 0 -3px 6px; width: 99px; align-self: stretch; display: flex; align-items: center; padding-left: 10px; background: #dde7f3; border-left: 1px solid #fff; }
.persp .vsep { margin: 0 5px 0 6px; }
.vsep { display: block; width: 1px; height: 18px; background: #8a95a2; flex: none; }
.javabtn { width: 52px; height: 22px; background: #a9d0f5; border: 1px solid #6fa5dd; display: flex; align-items: center; gap: 6px; padding-left: 1px; color: #222; font-size: 11.500px; }

/* Workbench */
.wb { height: 634px; display: grid; grid-template-columns: 339px 758px 253px; grid-template-rows: 469px 157px; column-gap: 5px; row-gap: 4px; padding: 4px 3px 0; }
.panel { background: #fff; border-radius: 8px; overflow: hidden; }
.left { grid-row: 1 / 3; }
.rightcol { display: flex; flex-direction: column; gap: 5px; }
.bottom { grid-column: 2 / 4; display: flex; flex-direction: column; }
.phead { height: 25px; display: flex; }
.vtab { height: 24px; display: flex; align-items: center; padding: 0 7px; background: linear-gradient(#dfe7f2, #fff); border-radius: 8px 10px 0 0; gap: 4px; color: #222; font-size: 11.600px; }
.vtab .x { margin-left: 3px; }
.x { width: 12px; height: 12px; }
.ptools { display: flex; align-items: center; margin-left: auto; }
.pe-tools { height: 24px; padding-right: 14px; }
.pe-tools .i16:nth-child(2) { margin-left: 7px; }
.pe-tools .vsep { margin: 0 9px 0 6px; }
.pe-tools .chev { margin-left: 16px; }
.chev { width: 9px; height: 6px; position: relative; display: block; margin-left: 20px; }
.chev::before { content: ""; position: absolute; inset: 0; background: #8a8a8a; clip-path: polygon(0 0, 100% 0, 50% 100%); }
.chev::after { content: ""; position: absolute; left: 1.500px; top: 1px; width: 6px; height: 3.500px; background: #fff; clip-path: polygon(0 0, 100% 0, 50% 100%); }
.min { display: block; width: 10px; height: 4px; border: 1px solid #7d7d7d; background: #fff; margin: -4px 0 0 12px; }
.max { display: block; width: 11px; height: 11px; border: 1px solid #7d7d7d; border-top-width: 2px; background: #fff; margin-left: 13px; }

/* Package explorer tree */
.tree { list-style: none; margin: 2px 0 0; padding: 0; }
.tree li { height: 18px; display: flex; align-items: center; white-space: nowrap; color: #222; }
.l1 { padding-left: 7px; }
.l2 { padding-left: 26px; }
.l3 { padding-left: 45px; }
.l4 { padding-left: 64px; }
.tree .i16 { margin-right: 4px; }
.tw { width: 16px; height: 10px; margin-right: 3px; position: relative; display: block; }
.tw::before { content: ""; position: absolute; left: 5px; top: 0; width: 7px; height: 10px; background: #a6a6a6; clip-path: polygon(0 0, 100% 50%, 0 100%); }
.tw::after { content: ""; position: absolute; left: 6px; top: 2px; width: 4px; height: 6px; background: #fff; clip-path: polygon(0 0, 100% 50%, 0 100%); }
.tw.open::before { left: 5px; top: 3px; width: 6px; height: 6px; background: #444; clip-path: polygon(100% 0, 100% 100%, 0 100%); }
.tw.open::after, .tw.none::before, .tw.none::after { display: none; }
.tree em { font-style: normal; color: #95805c; }
.sel { display: flex; align-items: center; height: 18px; border: 1px solid #dcdcdc; padding-right: 1px; margin-left: -1px; }

/* Editor */
.editor { background: #cddded; border: 1px solid #aebccc; border-width: 0 1px 1px 0; display: flex; flex-direction: column; }
.ed-tabs { height: 25px; display: flex; align-items: stretch; }
.etab { display: flex; align-items: center; gap: 4px; padding-left: 4px; width: 141px; color: #333; }
.etab.active { width: 141px; background: #fff; border-radius: 8px 10px 0 0; gap: 3px; padding-left: 4px; color: #222; }
.etab.active .x { margin-left: 7px; }
.ed-tools { padding-right: 13px; }
.ed-body { flex: 1; border-top: 2px solid #fff; display: flex; flex-direction: column; min-height: 0; margin: 0 1px 0 0; }
.ed-main { flex: 1; display: flex; min-height: 0; }
.pal { width: 198px; padding-left: 4px; flex: none; border-right: 2px solid #fff; }
.pal-top { height: 17px; display: flex; align-items: center; font-size: 12.500px; color: #111; }
.ltri { width: 0; height: 0; border: 4px solid transparent; border-right: 5px solid #1c3f6c; border-left: 0; margin: 0 12px 0 1px; }
.rule { width: 29px; height: 5px; border-top: 1px solid #fff; border-bottom: 1px solid #8ba0b8; margin: 0 5px 0 0; }
.pal-top strong { font-weight: 700; margin-right: 5px; }
.pal-wrap { width: 191px; }
.pal-sel { height: 22px; margin-bottom: 2px; display: flex; align-items: center; padding: 0 6px 0 1px; gap: 3px; border: 1px solid #9aa6b2; font-size: 12.500px; background: #cddded; }
.chev.dark { margin-left: auto; width: 11px; height: 7px; }
.chev.dark::before { background: #222; }
.chev.dark::after { background: #cddded; left: 2px; top: 1px; width: 7px; height: 4px; }
.acc { height: 22px; display: flex; align-items: center; gap: 4px; padding-left: 3px; font-weight: 700; color: #1a1a1a; background: linear-gradient(#fdfdfd, #dedede); border: solid #9d9d9d; border-width: 0 1px 1px 1px; white-space: nowrap; }
.pal-sel + .acc { border-top-width: 1px; }
.widgets { height: 155px; display: flex; background: #fff; overflow: hidden; margin-bottom: 1px; }
.w-body { flex: 1; padding: 1px 0 0 3px; min-width: 0; }
.w-row { display: flex; align-items: center; white-space: nowrap; }
.t8 { font-size: 8px; color: #444; }
.t9 { font-size: 9px; color: #333; }
.t11 { font-size: 10px; color: #222; }
.t13 { font-size: 12.500px; color: #222; }
.w1 { gap: 3px; height: 18px; }
.w2 { height: 24px; gap: 7px; padding-left: 2px; margin-top: 3px; }
.wbtn { display: block; background: #d8d8d8; border-bottom: 1px solid #bdbdbd; height: 23px; line-height: 22px; text-align: center; color: #333; }
.b1 { width: 39px; font-size: 11px; }
.b2 { width: 29px; font-size: 9px; }
.b3 { width: 32px; font-size: 9px; position: relative; }
.b3::after { content: ""; position: absolute; left: 10px; bottom: 1px; width: 12px; height: 2px; background: #888; }
.w3 { height: 16px; margin-top: 5px; padding-left: 5px; }
.cb { width: 11px; height: 11px; background: #dfe8ee; border: 1px solid #bbb; margin-right: 3px; position: relative; }
.cb::after { content: ""; position: absolute; left: 2px; top: -1px; width: 5px; height: 9px; border: solid #2a8fc4; border-width: 0 2.500px 2.500px 0; transform: rotate(40deg); }
.rb { width: 11px; height: 11px; border-radius: 50%; background: #2a8fc4; border: 2px solid #cfe4f0; margin: 0 4px 0 6px; }
.w4 { height: 16px; margin-top: 2px; }
.w5 { height: 40px; margin-top: 1px; padding-left: 5px; justify-content: space-between; padding-right: 19px; }
.spin { margin-top: -1px; }
.spin-t { font-size: 12.500px; line-height: 14px; color: #333; }
.spin-s { font-size: 8px; line-height: 10px; color: #555; }
.ring { width: 34px; height: 34px; }
.w6 { height: 22px; margin-top: 6px; padding-left: 3px; }
.ring2 { width: 22px; height: 22px; }
.tiny { width: 6px; height: 6px; border: 1px solid #eee; border-radius: 50%; margin: 0 6px 0 5px; }
.seek { width: 112px; height: 2px; background: #a8a8a8; position: relative; margin-top: 6px; }
.seek-on { display: block; position: absolute; left: 0; top: -4px; width: 34px; height: 2px; background: #35b5e2; }
.vscroll { width: 16px; background: #f0f0f0; display: flex; flex-direction: column; align-items: center; flex: none; }
.vscroll .thumb { width: 100%; background: #cdcdcd; display: block; }
.up, .dn, .lf, .rt { display: block; width: 8px; height: 8px; position: relative; flex: none; }
.up::before, .dn::before, .lf::before, .rt::before { content: ""; position: absolute; width: 5px; height: 5px; border: solid #606060; border-width: 1.500px 0 0 1.500px; }
.up::before { left: 1.500px; top: 3px; transform: rotate(45deg); }
.dn::before { left: 1.500px; top: 0; transform: rotate(225deg); }
.lf::before { left: 3px; top: 1.500px; transform: rotate(-45deg); }
.rt::before { left: 0; top: 1.500px; transform: rotate(135deg); }
.dim::before { border-color: #c8c8c8; }
.pal-sb { justify-content: flex-start; }
.pal-sb .up { margin: 4px 0 5px; }
.pal-sb .thumb { height: 69px; flex: none; }
.pal-sb .dn { margin-top: auto; margin-bottom: 3px; }
.design { flex: 1; min-width: 0; display: flex; flex-direction: column; }
.cfg { display: flex; align-items: center; }
.r1 { height: 39px; margin: 0 7px 0 11px; padding: 1px 0 0 6px; border-bottom: 1px solid #8fa5bc; white-space: nowrap; color: #2b2b2b; }
.r1 .da { width: 9px; margin-left: 10px; }
.r1 .da::before { left: 0; }
.cs { display: block; width: 1px; height: 22px; background: #8a9cb0; margin: 0 12px 0 4px; }
.a4 { margin-left: 4px; }
.r1 .a4 + .da { margin-left: 14px; }
.glb { margin-left: 3px; }
.r2 { height: 36px; padding-left: 15px; gap: 5px; margin-top: 1px; }
.r2 .da { width: 9px; margin-left: 9px; }
.r2 .da::before { left: 0; }
.r3 { height: 22px; padding-left: 9px; margin-top: 7px; }
.tog { display: flex; align-items: center; justify-content: center; }
.tog.on { width: 23px; height: 22px; background: #b6d3f0; border: 1px solid #6aa3de; }
.s3 { margin: 0 13px 0 3px; height: 20px; }
.b-b { margin-left: 9px; }
.r3 .da { width: 9px; margin-left: 8px; }
.r3 .da::before { left: 0; }
.b-c + .i16 { margin-left: 3px; }
.zooms { margin-left: auto; display: flex; align-items: center; gap: 7px; padding-right: 14px; }
.zooms .cs { height: 20px; margin: 0; }
.canvas-wrap { height: 305px; width: 552px; margin-left: 6px; margin-top: 7px; background: #f0f0f0; border-bottom: 2px solid #8d8d8d; border-right: 2px solid #fff; display: flex; flex-direction: column; flex: none; }
.canvas-row { flex: 1; display: flex; min-height: 0; }
.canvas { flex: 1; background: #969696; padding-left: 25px; overflow: hidden; min-width: 0; }
.device { width: 279px; height: 400px; background: #fff; box-shadow: 6px 6px 8px 1px #333; }
.status { height: 21px; background: #000; display: flex; align-items: center; justify-content: flex-end; gap: 3px; padding-right: 5px; }
.wifi { width: 16px; height: 15px; }
.batt { width: 10px; height: 16px; }
.actionbar { height: 42px; background: #222; display: flex; align-items: center; padding: 0 0 0 13px; gap: 5px; font-size: 15.500px; color: #e8e8e8; border-bottom: 1px solid #555; }
.launch { width: 24px; height: 24px; }
.hello { padding: 14px 14px; color: #444; }
.can-sb .up { margin: 6px 0 4px; }
.can-sb .thumb { height: 155px; flex: none; }
.can-sb .dn { margin-top: auto; margin-bottom: 4px; }
.hscroll { display: flex; align-items: center; background: #f0f0f0; flex: none; }
.can-hs { height: 16px; justify-content: space-between; padding: 0 5px 0 4px; margin-right: 16px; }
.subtabs { height: 22px; display: flex; padding: 0 0 0 1px; }
.stab { display: flex; align-items: center; gap: 3px; padding-left: 2px; height: 21px; background: #d3e0ee; width: 116px; white-space: nowrap; border-right: 1px solid #aebccc; }
.stab.on { background: #fff; border: 1px solid #aebccc; border-top: 0; border-radius: 0 0 3px 3px; margin-right: 1px; width: 119px; padding-left: 5px; }

/* Task list */
.task { height: 231px; display: flex; flex-direction: column; }
.tk-tools { padding-right: 14px; height: 24px; }
.tk-bar { height: 22px; display: flex; align-items: center; padding-left: 13px; margin-top: 2px; }
.tk-bar .da { width: 9px; margin-left: 5px; }
.tk-bar .da::before { left: 0; }
.tk-bar .vsep { margin: 0 4px 0 6px; height: 20px; }
.tk-bar .tog { margin-right: 3px; }
.tk-bar .vsep + .i16 { margin-left: 5px; }
.tk-bar .i16 + .i16 { margin-left: 7px; }
.tk-chev { height: 27px; padding: 9px 0 0 1px; }
.tk-chev .chev { margin-left: 17px; }
.tk-find { height: 26px; display: flex; align-items: center; padding-left: 6px; color: #2b5ea8; }
.find { width: 89px; height: 20px; border: 1px solid #b3b3b3; display: flex; align-items: center; justify-content: space-between; padding: 0 3px 0 10px; color: #666; margin-right: 15px; }
.ftri { display: block; width: 0; height: 0; border: 4px solid transparent; border-left: 4px solid #444; border-right: 0; margin-right: 9px; }
.tk-find a { margin-right: 13px; white-space: nowrap; }
.helpi { margin-left: auto; margin-right: 4px; width: 15px; height: 15px; border: 1.500px solid #3a6ea8; border-radius: 50%; font: bold 10px/12px "Liberation Sans", sans-serif; text-align: center; color: #3a6ea8; flex: none; }
.mylyn { margin-top: auto; height: 65px; background: linear-gradient(#d6e3f2, #fff); border-top: 1px solid #c4d0dc; border-radius: 0 0 8px 8px; padding: 3px 0 0 9px; }
.my-h { display: flex; align-items: center; gap: 4px; height: 20px; font-size: 13.500px; color: #1a3f6e; }
.my-h strong { font-weight: 700; }
.my-h .x { margin-left: auto; margin-right: 11px; }
.mylyn p { margin: 5px 0 0 20px; line-height: 15px; color: #222; }
.mylyn a { color: #1b6cb4; text-decoration: underline; }

/* Outline */
.outline { height: 233px; display: flex; flex-direction: column; }
.outline .vtab { padding-top: 2px; }
.ol-tools { padding-right: 14px; height: 24px; }
.ol-tools .chev { margin-left: 15px; }
.ol-body { flex: 1; display: flex; min-height: 0; padding-top: 3px; }
.ol-tree { width: 128px; padding-left: 3px; flex: none; display: flex; flex-direction: column; }
.ol-rows { flex: 1; overflow: hidden; width: 122px; }
.ol-r { height: 18px; display: flex; align-items: center; white-space: nowrap; color: #222; }
.r-a { padding-left: 4px; }
.r-a .tw { margin-right: 2px; }
.r-a .i16 { margin-right: 5px; }
.r-b { padding-left: 41px; gap: 5px; }
.ab { width: 16px; height: 16px; border: 1px solid #555; border-radius: 2px; font-size: 10px; line-height: 13px; text-align: center; flex: none; }
.ol-hs { height: 15px; width: 122px; justify-content: flex-start; margin-bottom: 4px; }
.ol-hs .lf { margin: 0 5px 0 4px; }
.ol-hs .thumb { width: 55px; height: 100%; background: #cdcdcd; display: block; }
.ol-hs .rt { margin-left: 38px; }
.props { width: 121px; border: 1px solid #9a9a9a; margin-bottom: 3px; display: flex; flex-direction: column; flex: none; }
.pr-bar { height: 24px; display: flex; align-items: center; padding-left: 9px; border-bottom: 1px solid #ababab; flex: none; }
.pr-bar .vsep { margin: 0 8px 0 6px; }
.sorti { width: 16px; height: 20px; display: flex; flex: none; align-items: center; }
.sortarrow { width: 6px; height: 16px; }
.azs { display: flex; flex-direction: column; width: 10px; font: bold 8px/10px "Liberation Sans", sans-serif; text-align: center; }
.az-a { color: #2e7a7a; }
.az-z { color: #7a3a8a; }
.pr-empty { flex: 1; display: flex; align-items: center; justify-content: center; color: #8c8c8c; padding-left: 8px; white-space: nowrap; }

/* Console */
.bt-head { height: 27px; display: flex; align-items: center; padding-left: 3px; flex: none; }
.btab { display: flex; align-items: center; gap: 5px; height: 27px; margin-right: 11px; white-space: nowrap; font-size: 11.600px; }
.dimt { color: #9a9a9a; }
.atg { color: #7fa4c8; font-weight: 400; width: 14px; text-align: center; }
.at { gap: 5px; margin-right: 8px; }
.at + .dimt { gap: 4px; margin-right: 6px; }
.cons { height: 26px; width: 93px; margin: 0; padding-left: 4px; gap: 4px; background: linear-gradient(#dfe7f2, #fff); border-radius: 8px 10px 0 0; color: #222; }
.cons .x { margin-left: 4px; }
.bt-tools { padding-right: 14px; }
.bt-tools .i16 + .i16 { margin-left: 7px; }
.bt-tools .vsep { margin: 0 9px 0 6px; }
.bt-tools .vsep + .i16 { margin-left: 0; }
.bt-tools .da { width: 9px; margin: 0 7px 0 6.500px; }
.bt-tools .da::before { left: 0; }
.bt-tools .da + .i16 { margin-left: 0; }
.bt-tools .da + .min { margin-left: 2px; }
.ddms { height: 16px; padding-left: 2px; flex: none; line-height: 17px; }
.bt-body { flex: 1; display: flex; border-top: 1px solid #a3a3a3; min-height: 0; margin: 0 3px 0 0; }
.bt-text { flex: 1; }
.bt-sb { margin-top: 1px; justify-content: space-between; padding: 7px 0 5px; }
.bt-hs { height: 16px; margin: 0 3px 3px 0; justify-content: flex-end; padding-right: 21px; }

.trim { height: 29px; display: flex; justify-content: flex-start; padding: 9px 0 0 1081px; }
.trim .grip { height: 15px; background: repeating-linear-gradient(#7c7c7c 0 1px, transparent 1px 4px); }
```
